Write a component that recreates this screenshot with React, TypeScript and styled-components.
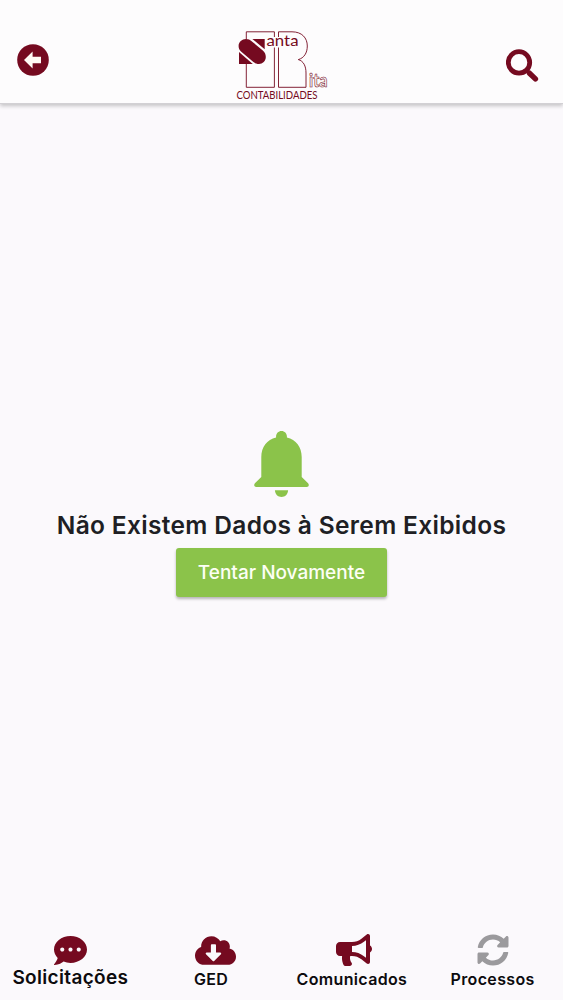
import React from "react";
import styled, { createGlobalStyle } from "styled-components";
import {
  FaCommentDots,
  FaCloudDownloadAlt,
  FaBullhorn,
  FaSyncAlt,
} from "react-icons/fa";

const WINE = "#750a20";
const GREEN = "#8bc34a";

const GlobalStyle = createGlobalStyle`
  * { box-sizing: border-box; }
  body { margin: 0; background: #fbf9fc; font-family: Inter, "Liberation Sans", sans-serif; }
`;

const Screen = styled.div`
  width: 563px;
  height: 1000px;
  display: flex;
  flex-direction: column;
  overflow: hidden;
`;

const Header = styled.header`
  height: 104px;
  flex: none;
  display: flex;
  justify-content: space-between;
  align-items: flex-start;
  padding: 30px 24px 0 17px;
  background: #fdfcfd;
  border-bottom: 1px solid #d2d0d4;
  box-shadow: 0 2px 4px rgba(0, 0, 0, 0.22);
`;

const IconButton = styled.button<{ $top: number }>`
  display: flex;
  margin: ${(p) => p.$top}px 0 0;
  padding: 0;
  border: 0;
  background: none;
  color: ${WINE};
`;

const LogoMark = styled.svg`
  display: block;
  width: 94px;
  height: 74px;
  margin-left: 11px;
  overflow: visible;
`;

const Empty = styled.main`
  flex: 1;
  display: flex;
  flex-direction: column;
  align-items: center;
  padding-top: 326px;
`;

const Bell = styled.svg`
  display: block;
  width: 56px;
  height: 68px;
`;

const Message = styled.h1`
  margin: 11px 0 0;
  font-size: 24.5px;
  line-height: 32px;
  font-weight: 640;
  letter-spacing: 0.33px;
  white-space: nowrap;
  color: #201f24;
`;

const Retry = styled.button`
  width: 211px;
  height: 49px;
  margin-top: 7px;
  padding: 0 0 1px;
  border: 0;
  border-radius: 3px;
  background: ${GREEN};
  box-shadow: 0 2px 3px rgba(0, 0, 0, 0.28);
  color: #fdfff5;
  font: 500 19px Inter, sans-serif;
  white-space: nowrap;
`;

const TabBar = styled.nav`
  height: 70px;
  flex: none;
  display: grid;
  grid-template-columns: repeat(4, 1fr);
`;

const Tab = styled.a<{ $active?: boolean }>`
  display: flex;
  flex-direction: column;
  align-items: center;
  color: ${(p) => (p.$active ? "#9b9a9d" : WINE)};
`;

const TabIcon = styled.span<{ $indent?: number }>`
  height: 40px;
  display: flex;
  align-items: center;
  padding-left: ${(p) => p.$indent ?? 0}px;
`;

const TabLabel = styled.span<{ $large?: boolean }>`
  font-size: ${(p) => (p.$large ? 19 : 16)}px;
  line-height: 20px;
  margin-top: ${(p) => (p.$large ? -2 : -1)}px;
  font-weight: 600;
  letter-spacing: ${(p) => (p.$large ? 0.33 : 0.35)}px;
  color: #0c0b0e;
`;

function Logo() {
  return (
    <LogoMark viewBox="236 30 94 74" fill="none" stroke={WINE} strokeWidth="0.9">
      <path d="M246.3 39V31.8H274.4V37M274.4 47.5V87.3H246.3V64" />
      <path d="M278.5 37V31.8H292C302 31.8 307.3 38 307.3 46C307.3 53 304 58 298.3 59.6C303.5 61 306 66 306 73V87.3H278.5V47.5" />
      <g fill={WINE} stroke="none">
        <path d="M252.4 39H264.7V49.2Z" />
        <path d="M246 39C248.4 39 250 39.8 251.3 40.9L262.8 50.6C265 52.4 265.8 54.6 265.8 57C265.8 61 262.6 64 259 64C256.6 64 254.8 63.2 253.4 62L241 51.4C239.3 50 238.6 48 238.6 46C238.6 42 242 39 246 39Z" />
        <path d="M239 52V64H252.8Z" />
        <text x="266.5" y="46.2" fontFamily="Lato, sans-serif" fontSize="16" textLength="32" lengthAdjust="spacingAndGlyphs">anta</text>
        <text x="236.5" y="99" fontFamily="Lato, sans-serif" fontSize="11.6" textLength="81" lengthAdjust="spacingAndGlyphs">CONTABILIDADES</text>
      </g>
      <text x="309" y="87.2" fontFamily="Lato, sans-serif" fontWeight="700" fontSize="18" strokeWidth="0.6" textLength="18.5" lengthAdjust="spacingAndGlyphs">ita</text>
    </LogoMark>
  );
}

const tabs = [
  { label: "Solicitações", icon: <FaCommentDots size={33} />, large: true },
  { label: "GED", icon: <FaCloudDownloadAlt size={41} />, indent: 8 },
  { label: "Comunicados", icon: <FaBullhorn size={36} />, indent: 4 },
  { label: "Processos", icon: <FaSyncAlt size={32} />, active: true },
];

export default function App() {
  return (
    <Screen>
      <GlobalStyle />
      <Header>
        <IconButton $top={14} aria-label="Voltar">
          <svg width="32" height="32" viewBox="0 0 32 32">
            <circle cx="16" cy="16" r="15.8" fill={WINE} />
            <path d="M7 16L15.6 7.6V12.8H24V19.2H15.6V24.4Z" fill="#fffaf5" />
          </svg>
        </IconButton>
        <Logo />
        <IconButton $top={19} aria-label="Buscar">
          <svg width="33" height="33" viewBox="0.5 0 33 33" fill="none" stroke={WINE}>
            <circle cx="13.5" cy="13.4" r="10.7" strokeWidth="4.8" />
            <path d="M20.5 20.8L23.5 23.8" strokeWidth="3.6" />
            <path d="M24 24.2L29.9 29.9" strokeWidth="5.4" strokeLinecap="round" />
          </svg>
        </IconButton>
      </Header>
      <Empty>
        <Bell viewBox="0.5 0 56 68" fill={GREEN}>
          <path d="M28 1C31.3 1 33.8 3.7 33.4 7.5C42.5 9.6 48.2 17 48.2 27V47L54.6 53.2C56 55 55.2 57 53.2 57H2.8C.8 57 0 55 1.4 53.2L7.8 47V27C7.8 17 13.5 9.6 22.6 7.5C22.2 3.7 24.7 1 28 1Z" />
          <path d="M21.4 60.3H34.6C34.3 64.5 31.6 67 28 67S21.7 64.5 21.4 60.3Z" />
        </Bell>
        <Message>Não Existem Dados à Serem Exibidos</Message>
        <Retry>Tentar Novamente</Retry>
      </Empty>
      <TabBar>
        {tabs.map((t) => (
          <Tab key={t.label} $active={t.active}>
            <TabIcon $indent={t.indent}>{t.icon}</TabIcon>
            <TabLabel $large={t.large}>{t.label}</TabLabel>
          </Tab>
        ))}
      </TabBar>
    </Screen>
  );
}
